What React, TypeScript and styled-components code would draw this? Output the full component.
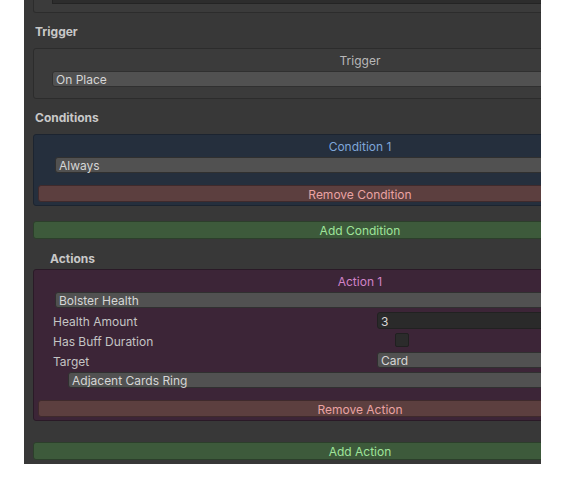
import React from "react";
import styled, { createGlobalStyle } from "styled-components";

const Global = createGlobalStyle`
    body {
        margin: 0;
        background: #ffffff;
        font-family: Inter, "Noto Sans", sans-serif;
        font-size: 12px;
    }
`

const Page = styled.div`
    padding-left: 24px;
    width: 570px;
    height: 486px;
    box-sizing: border-box;
`

const Inspector = styled.div`
    width: 517px;
    height: 464px;
    background: #383838;
    overflow: hidden;
    padding-left: 9px;
    box-sizing: border-box;
`

const Column = styled.div`
    width: 654px;
    display: flex;
    flex-direction: column;
`

const TopStub = styled.div`
    height: 13px;
    box-sizing: border-box;
    background: #3b3b3b;
    border: 1px solid #2c2c2c;
    border-top: none;
    border-radius: 0 0 3px 3px;
`

const StubField = styled.div`
    height: 3px;
    margin-left: 18px;
    margin-right: 10px;
    background: #2d2d2d;
    border: 1px solid #242424;
    border-top: none;
`

const Header = styled.div<{ $indent?: number; $top: number }>`
    height: 18px;
    line-height: 20px;
    margin-top: ${(p) => p.$top}px;
    padding-left: ${(p) => p.$indent ?? 2}px;
    font-weight: 700;
    color: #c8c8c8;
`

const Box = styled.div<{ $bg: string; $border: string; $top: number }>`
    margin-top: ${(p) => p.$top}px;
    background: ${(p) => p.$bg};
    border: 1px solid ${(p) => p.$border};
    border-radius: 3px;
    padding: 2px 0 3px 0;
    display: flex;
    flex-direction: column;
`

const Title = styled.div<{ $color: string }>`
    height: 18px;
    line-height: 20px;
    text-align: center;
    color: ${(p) => p.$color};
`

const Popup = styled.div<{ $left: number; $top: number }>`
    height: 16px;
    line-height: 16px;
    margin: ${(p) => p.$top}px 6px 0 ${(p) => p.$left}px;
    padding-left: 3px;
    box-sizing: border-box;
    background: #515151;
    border: 1px solid #303030;
    border-radius: 3px;
    color: #d6d6d6;
    white-space: nowrap;
`

const Row = styled.div<{ $top: number }>`
    height: 18px;
    margin-top: ${(p) => p.$top}px;
    display: flex;
    align-items: center;
`

const Label = styled.div`
    width: 343px;
    padding-left: 19px;
    padding-top: 2px;
    box-sizing: border-box;
    color: #c4c4c4;
    flex-shrink: 0;
`

const IntField = styled.div`
    flex: 1;
    height: 17px;
    line-height: 17px;
    margin-right: 6px;
    padding-left: 3px;
    box-sizing: border-box;
    background: #2a2a2a;
    border: 1px solid #212121;
    border-radius: 3px;
    color: #d6d6d6;
`

const Check = styled.div`
    width: 14px;
    height: 14px;
    margin-left: 18px;
    box-sizing: border-box;
    background: #2b2b2b;
    border: 1px solid #202020;
    border-radius: 2px;
`

const ValuePopup = styled.div`
    flex: 1;
    height: 16px;
    line-height: 16px;
    margin-right: 6px;
    padding-left: 3px;
    box-sizing: border-box;
    background: #515151;
    border: 1px solid #303030;
    border-radius: 3px;
    color: #d6d6d6;
`

const Button = styled.div<{ $kind: "remove" | "add"; $top: number; $inset?: boolean }>`
    height: ${(p) => (p.$kind === "add" ? 18 : 17)}px;
    line-height: ${(p) => (p.$kind === "add" ? 18 : 17)}px;
    margin-top: ${(p) => p.$top}px;
    margin-left: ${(p) => (p.$inset ? 4 : 0)}px;
    margin-right: ${(p) => (p.$inset ? 4 : 0)}px;
    box-sizing: border-box;
    text-align: center;
    border-radius: 3px;
    background: ${(p) => (p.$kind === "add" ? "#3d5a3b" : "#5c3f3f")};
    border: 1px solid ${(p) => (p.$kind === "add" ? "#2c3f2b" : "#3f2a2c")};
    color: ${(p) => (p.$kind === "add" ? "#9fe49a" : "#eaa3a3")};
`

export default function App() {
    return (
        <Page>
            <Global />
            <Inspector>
                <Column>
                    <TopStub>
                        <StubField />
                    </TopStub>

                    <Header $top={9}>Trigger</Header>
                    <Box $top={8} $bg="#3b3b3b" $border="#2c2c2c" style={{ paddingBottom: 11 }}>
                        <Title $color="#b8b8b8">Trigger</Title>
                        <Popup $left={18} $top={2}>On Place</Popup>
                    </Box>

                    <Header $top={9}>Conditions</Header>
                    <Box $top={8} $bg="#252f3d" $border="#1c2430">
                        <Title $color="#7fa6d9">Condition 1</Title>
                        <Popup $left={21} $top={2}>Always</Popup>
                        <Button $kind="remove" $top={12} $inset>Remove Condition</Button>
                    </Box>
                    <Button $kind="add" $top={15}>Add Condition</Button>

                    <Header $top={10} $indent={17}>Actions</Header>
                    <Box $top={2} $bg="#3c2537" $border="#2a1a27">
                        <Title $color="#d283c8">Action 1</Title>
                        <Popup $left={21} $top={2}>Bolster Health</Popup>
                        <Row $top={3}>
                            <Label>Health Amount</Label>
                            <IntField>3</IntField>
                        </Row>
                        <Row $top={2}>
                            <Label>Has Buff Duration</Label>
                            <Check />
                        </Row>
                        <Row $top={2}>
                            <Label>Target</Label>
                            <ValuePopup>Card</ValuePopup>
                        </Row>
                        <Popup $left={34} $top={3}>Adjacent Cards Ring</Popup>
                        <Button $kind="remove" $top={12} $inset>Remove Action</Button>
                    </Box>
                    <Button $kind="add" $top={21}>Add Action</Button>
                </Column>
            </Inspector>
        </Page>
    );
}
